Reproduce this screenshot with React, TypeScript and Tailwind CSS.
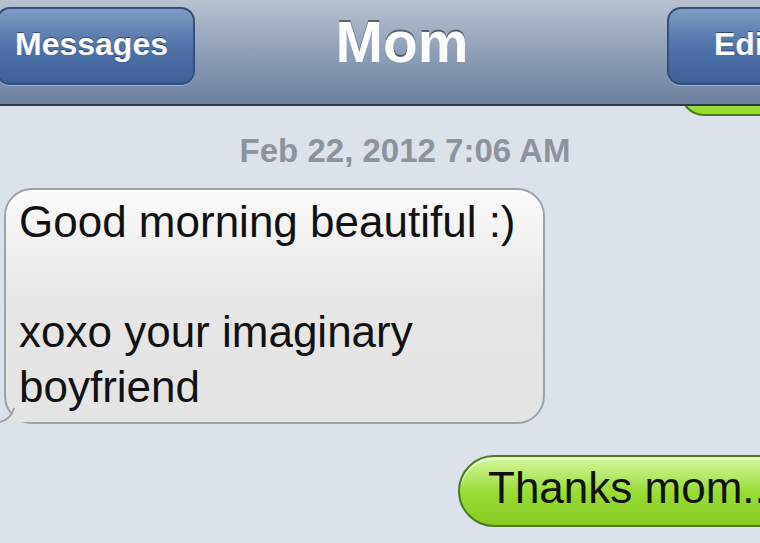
export default function App() {
  return (
    <div
      className="w-[760px] h-[543px] overflow-hidden bg-[#dbe2ec] flex flex-col"
      style={{ fontFamily: '"Liberation Sans", Arial, sans-serif' }}
    >
      {/* Nav bar */}
      <div className="relative z-10 h-[106px] shrink-0 border-b-2 border-[#2e3a4b] bg-gradient-to-b from-[#b8c3d2] via-[#8e9fb8] to-[#6c81a0] flex items-start">
        <div className="ml-[-4px] mt-[7px] h-[78px] w-[199px] shrink-0 rounded-[14px] border-2 border-[#34507a] bg-gradient-to-b from-[#7d9cc6] via-[#4f74a8] to-[#3c6196] flex items-center pl-[17px] pb-[4px] shadow-[0_1px_0_rgba(255,255,255,0.35)]">
          <span className="text-[32px] font-bold text-white [text-shadow:0_-1px_0_rgba(0,0,0,0.45)]">Messages</span>
        </div>
        <div className="flex-1 flex justify-center pr-[58px]">
          <span className="mt-[0px] text-[57px] leading-normal font-bold text-white [text-shadow:0_-2px_0_rgba(0,0,0,0.45)]">Mom</span>
        </div>
        <div className="mt-[7px] mr-[-60px] h-[78px] w-[153px] shrink-0 rounded-[14px] border-2 border-[#34507a] bg-gradient-to-b from-[#7d9cc6] via-[#4f74a8] to-[#3c6196] flex items-center pl-[45px] pb-[4px] shadow-[0_1px_0_rgba(255,255,255,0.35)]">
          <span className="text-[32px] font-bold text-white [text-shadow:0_-1px_0_rgba(0,0,0,0.45)]">Edit</span>
        </div>
      </div>

      {/* previous sent bubble peeking under the bar */}
      <div className="flex justify-end -mt-[40px] h-[50px] shrink-0">
        <div className="w-[110px] mr-[-30px] h-[50px] rounded-[24px] border-2 border-[#4c7d1e] bg-gradient-to-b from-[#b9ec6a] to-[#93dc2c]" />
      </div>

      {/* Timestamp */}
      <div className="mt-[18px] text-center pl-[50px] text-[33px] font-bold text-[#8c939e] leading-none">
        Feb 22, 2012 7:06 AM
      </div>

      {/* Received bubble */}
      <div className="mt-[21px] relative w-[547px] shrink-0">
        <div className="ml-[4px] w-[541px] rounded-[28px] border-2 border-[#9da2a9] bg-gradient-to-b from-[#fafafa] via-[#e6e6e6] to-[#e4e4e4] pl-[13px] pt-[4px] pb-[8px] text-[44px] leading-[55px] text-[#111] shadow-[inset_0_2px_0_rgba(255,255,255,0.9)]">
          <div>Good morning beautiful :)</div>
          <div>&nbsp;</div>
          <div>xoxo your imaginary</div>
          <div>boyfriend</div>
        </div>
        <svg className="absolute left-0 bottom-0" width="30" height="22" viewBox="0 0 30 22">
          <path d="M0 20 C8 18 12 14 14 6 L28 6 L28 20 Z" fill="#e4e4e4" />
          <path d="M0 20 C8 18 12 14 14 6" fill="none" stroke="#9da2a9" strokeWidth="2" />
        </svg>
      </div>

      {/* Sent bubble */}
      <div className="mt-[31px] flex justify-end">
        <div className="mr-[-40px] h-[72px] w-[342px] shrink-0 rounded-[36px] border-2 border-[#4a7a1d] bg-gradient-to-b from-[#d6f79b] via-[#99de34] to-[#84cc22] flex items-center pl-[28px] pb-[6px] text-[44px] whitespace-nowrap text-[#111] shadow-[inset_0_3px_0_rgba(255,255,255,0.5)]">
          Thanks mom..
        </div>
      </div>
    </div>
  )
}
